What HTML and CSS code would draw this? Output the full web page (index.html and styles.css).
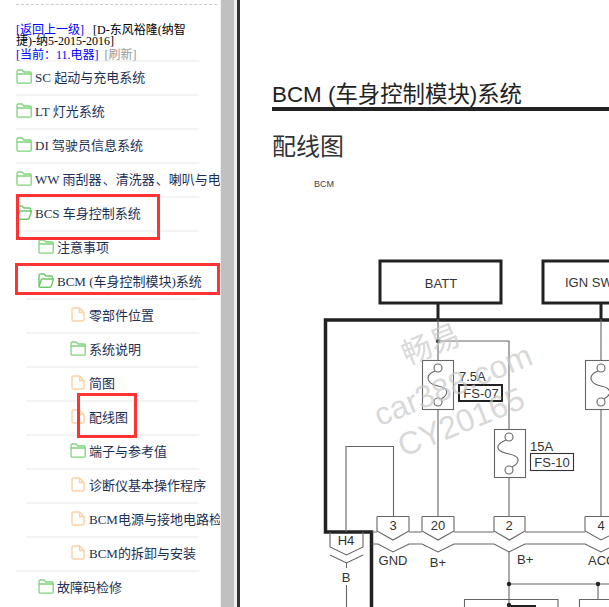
FILE: index.html
```html
<!DOCTYPE html>
<html lang="en">
<head>
  <meta charset="UTF-8" />
  <title>BCM 配线图</title>
  <link rel="stylesheet" href="styles.css">
</head>
<body>
  <svg width="0" height="0" class="defs">
    <symbol id="folder" viewBox="0 0 16 15">
      <path d="M1 13V2.5Q1 1 2.5 1H6L8 3H14Q15.2 3 15.2 4.2V13Q15.2 14.2 14 14.2H2Q1 14.2 1 13ZM1 5H15" fill="#fff" stroke="#7fd37b" stroke-width="1.3"/>
    </symbol>
    <symbol id="folder-open" viewBox="0 0 16 15">
      <path d="M1 13V2.5Q1 1 2.5 1H6L8 3H13.5Q14.5 3 14.5 4.2V5.5M1 13.5L3.5 6H15.5L13.2 13.2Q13 14.2 12 14.2H2Q1 14.2 1 13.5Z" fill="#fff" stroke="#6ccb68" stroke-width="1.4"/>
    </symbol>
    <symbol id="file" viewBox="0 0 14 15">
      <path d="M2.5 1H8.5L13 5.5V12.5Q13 14 11.5 14H2.5Q1 14 1 12.5V2.5Q1 1 2.5 1ZM8.5 1V5.5H13" fill="#fff" stroke="#fdd0a2" stroke-width="1.4"/>
    </symbol>
  </svg>

  <aside class="sidebar">
    <div class="dashes"></div>
    <div class="crumbs">
      <p class="crumb-top"><a href="#">[返回上一级]</a>&nbsp;&nbsp; <span>[D-东风裕隆(纳智捷)-纳5-2015-2016]</span></p>
      <p class="crumb-now"><a href="#">[当前：11.电器]</a> &nbsp;<a href="#" class="refresh">[刷新]</a></p>
    </div>
    <ul class="tree">
      <li><div class="row"><svg class="ico"><use href="#folder"/></svg>SC 起动与充电系统</div></li>
      <li><div class="row"><svg class="ico"><use href="#folder"/></svg>LT 灯光系统</div></li>
      <li><div class="row"><svg class="ico"><use href="#folder"/></svg>DI 驾驶员信息系统</div></li>
      <li><div class="row"><svg class="ico"><use href="#folder"/></svg>WW 雨刮器&#8202;、清洗器&#8202;、喇叭与电</div></li>
      <li>
        <div class="row"><svg class="ico"><use href="#folder-open"/></svg>BCS 车身控制系统</div>
        <ul class="sub">
          <li><div class="row"><svg class="ico"><use href="#folder"/></svg>注意事项</div></li>
          <li>
            <div class="row"><svg class="ico"><use href="#folder-open"/></svg>BCM (车身控制模块)系统</div>
            <ul class="sub-2">
              <li><div class="row"><svg class="ico ico-file"><use href="#file"/></svg>零部件位置</div></li>
              <li><div class="row"><svg class="ico"><use href="#folder"/></svg>系统说明</div></li>
              <li><div class="row"><svg class="ico ico-file"><use href="#file"/></svg>简图</div></li>
              <li><div class="row"><svg class="ico ico-file"><use href="#file"/></svg>配线图</div></li>
              <li><div class="row"><svg class="ico"><use href="#folder"/></svg>端子与参考值</div></li>
              <li><div class="row"><svg class="ico ico-file"><use href="#file"/></svg>诊断仪基本操作程序</div></li>
              <li><div class="row"><svg class="ico ico-file"><use href="#file"/></svg>BCM电源与接地电路检查</div></li>
              <li><div class="row"><svg class="ico ico-file"><use href="#file"/></svg>BCM的拆卸与安装</div></li>
            </ul>
          </li>
          <li><div class="row"><svg class="ico"><use href="#folder"/></svg>故障码检修</div></li>
        </ul>
      </li>
    </ul>
    <div class="mark mark-bcs"></div>
    <div class="mark mark-bcm"></div>
    <div class="mark mark-wiring"></div>
  </aside>

  <div class="splitter"></div>

  <main class="page">
    <svg class="sheet" width="369" height="607" viewBox="240 0 369 607">
      <text x="272" y="102" class="h1">BCM (车身控制模块)系统</text>
      <rect x="272" y="107" width="337" height="4" fill="#222"/>
      <text x="272" y="155" class="h2">配线图</text>
      <text x="314" y="187" class="tiny">BCM</text>

      <g fill="none" stroke="#222" stroke-width="3">
        <rect x="380" y="261" width="121" height="42"/>
        <rect x="543" y="261" width="80" height="42"/>
        <path d="M438 303V319M601 303V319"/>
        <path d="M609 320H325.500V532H371.500V607" stroke-width="3.500"/>
        <rect x="459" y="385" width="43" height="16" stroke-width="2"/>
      </g>

      <g fill="none" stroke="#666" stroke-width="1.100">
        <path d="M438 319V360M438 341H509V429M438 410V516M601 319V360M601 410V516M509 478V516"/>
        <rect x="422.500" y="360.500" width="31" height="49"/>
        <rect x="585.500" y="360.500" width="31" height="49"/>
        <rect x="494.500" y="429.500" width="31" height="48"/>
        <circle cx="438" cy="368" r="4"/>
        <circle cx="438" cy="402" r="4"/>
        <circle cx="601" cy="368" r="4"/>
        <circle cx="601" cy="402" r="4"/>
        <circle cx="509" cy="437" r="4"/>
        <circle cx="509" cy="470" r="4"/>
        <path d="M435 371C423 376 428 384 438 386C448 388 450 394 441 399"/>
        <path d="M598 371C586 376 591 384 601 386C611 388 613 394 604 399"/>
        <path d="M506 440C492 446 498 452 509 454C520 456 521 462 512 467"/>
        <rect x="530.500" y="453.500" width="43" height="17" stroke="#333"/>
        <path d="M346 532V446.500H393.500V516"/>
        <path d="M377 516.500H409M377 516.500V531L393 540L409 531V516.500"/>
        <path d="M422 516.500H454M422 516.500V531L438 540L454 531V516.500"/>
        <path d="M494 516.500H525M494 516.500V531L509.500 540L525 531V516.500"/>
        <path d="M585 516.500H609M585 516.500V531L601 540L609 536"/>
        <path d="M372 532H377M409 532H422M454 532H494M525 532H585"/>
        <path d="M372 544H378L393 552L409 544H422L438 552L454 544H494L509 552L525 544H585L601 552L609 548"/>
        <path d="M330 532V547L346.500 555L363 547V532"/>
        <path d="M330 555L346.500 563L363 555M346.500 563V568M346.500 585V607"/>
        <path d="M509 552V607M509 584H609M598 584V599"/>
        <path d="M464.500 607V599.500H558V607M579.500 607V599.500H609"/>
      </g>
      <path d="M509 606H536" stroke="#222" stroke-width="2"/>
      <circle cx="438" cy="341" r="2.200" fill="#333"/>
      <circle cx="509" cy="584" r="2.200" fill="#222"/>
      <circle cx="598" cy="584" r="2.200" fill="#222"/>
      <circle cx="509" cy="605" r="2.200" fill="#222"/>

      <text x="441" y="288" class="lbl lbl-c">BATT</text>
      <text x="565" y="287" class="lbl">IGN SW</text>
      <text x="459" y="381" class="lbl">7.5A</text>
      <text x="481" y="398" class="lbl lbl-c">FS-07</text>
      <text x="530" y="451" class="lbl">15A</text>
      <text x="552" y="467" class="lbl lbl-c">FS-10</text>
      <text x="393" y="530" class="lbl lbl-c">3</text>
      <text x="438" y="530" class="lbl lbl-c">20</text>
      <text x="509" y="530" class="lbl lbl-c">2</text>
      <text x="601" y="530" class="lbl lbl-c">4</text>
      <text x="346" y="545" class="lbl lbl-c">H4</text>
      <text x="393" y="565" class="lbl lbl-c">GND</text>
      <text x="438" y="567" class="lbl lbl-c">B+</text>
      <text x="517" y="564" class="lbl">B+</text>
      <text x="588" y="565" class="lbl">ACC</text>
      <text x="346" y="582" class="lbl lbl-c">B</text>

      <g class="wm">
        <text x="431" y="355" class="wm-cn" transform="rotate(-22 431 345)">畅易</text>
        <text x="453" y="396" transform="rotate(-22 453 385)">car388.com</text>
        <text x="461" y="433" transform="rotate(-22 461 422)">CY20165</text>
      </g>
    </svg>
  </main>
</body>
</html>
```

FILE: styles.css
```css
html, body {
  height: 100%;
  margin: 0;
  padding: 0;
}
body {
  display: flex;
  height: 607px;
  overflow: hidden;
  background: #fff;
  font-family: "Liberation Serif", "Noto Sans CJK SC", serif;
}
.defs {
  position: absolute;
}
.sidebar {
  position: relative;
  width: 220px;
  flex: none;
  padding: 4px 0 0 16px;
  box-sizing: border-box;
  overflow: hidden;
  background: #fff;
}
.dashes {
  width: 201px;
  border-top: 1px dashed #ccc;
}
.crumbs {
  height: 55px;
  padding-top: 20px;
  box-sizing: border-box;
  width: 172px;
  font-size: 12px;
  color: #000;
}
.crumbs p {
  margin: 0;
}
.crumbs a {
  color: #00f;
  text-decoration: none;
}
.crumb-top {
  line-height: 11px;
}
.crumbs .crumb-now {
  line-height: 14px;
  margin-top: 1px;
}
.crumbs .refresh {
  color: #999;
}
.tree, .sub, .sub-2 {
  list-style: none;
  margin: 0;
  padding: 0;
}
.row {
  display: flex;
  align-items: center;
  width: 183px;
  height: 28px;
  padding-bottom: 4px;
  border-top: 2px solid #f4f4f4;
  font-size: 13px;
  color: #1c3054;
  white-space: nowrap;
}
.ico {
  width: 16px;
  height: 15px;
  flex: none;
  margin-right: 3px;
}
.ico-file {
  width: 14px;
  margin: 0 4px 0 1px;
}
.sub .row {
  padding-left: 22px;
  width: 161px;
}
.sub-2 {
  margin-left: 10px;
}
.sub-2 .row {
  padding-left: 44px;
  width: 129px;
}
.mark {
  position: absolute;
  border: 3px solid #f33;
  box-sizing: border-box;
}
.mark-bcs {
  left: 16px;
  top: 194px;
  width: 144px;
  height: 46px;
}
.mark-bcm {
  left: 15px;
  top: 263px;
  width: 205px;
  height: 32px;
}
.mark-wiring {
  left: 77px;
  top: 393px;
  width: 60px;
  height: 45px;
}
.splitter {
  width: 17px;
  flex: none;
  background: #c0c0c0;
  border-left: 1px solid #eee;
  border-right: 3px solid #f0f0f0;
  box-sizing: border-box;
}
.page {
  flex: 1;
  border-left: 3px solid #333;
  min-width: 0;
  overflow: hidden;
}
.sheet {
  display: block;
  font-family: "Liberation Sans", "Noto Sans CJK SC", sans-serif;
}
.h1 {
  font-size: 22.400px;
  fill: #222;
}
.h2 {
  font-size: 24px;
  fill: #333;
}
.tiny {
  font-size: 9px;
  fill: #444;
}
.lbl {
  font-size: 13px;
  fill: #333;
}
.lbl-c {
  text-anchor: middle;
}
.wm text {
  font-size: 32px;
  fill: #c8c8c8;
  fill-opacity: 0.7;
  text-anchor: middle;
}
.wm .wm-cn {
  font-size: 30px;
}
```
